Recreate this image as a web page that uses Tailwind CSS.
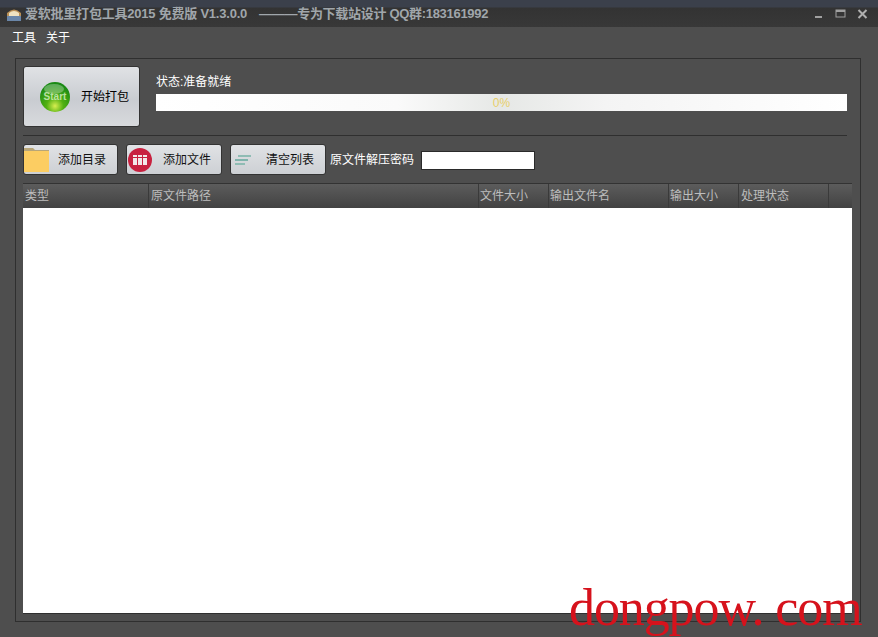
<!DOCTYPE html>
<html lang="zh-CN">
<head>
    <meta charset="UTF-8">
    <title>爱软批里打包工具</title>
    <script src="https://cdn.jsdelivr.net/npm/@tailwindcss/browser@4"></script>
</head>
<body class="bg-[#4d4d4d]">
<div class="relative w-[878px] h-[637px] overflow-hidden flex flex-col bg-[#4e4e4e] font-['Liberation_Sans','Noto_Sans_CJK_SC',sans-serif] text-[12px]">
    <!-- Title bar -->
    <div class="h-[27px] shrink-0 flex items-center bg-[linear-gradient(#3b404b_0,#3b404b_7px,#333333_8px,#383838_100%)] pl-[6px] pr-[10px]">
        <svg width="16" height="16" viewBox="0 0 16 16" class="mr-[3px]">
            <path d="M1 7 Q8 0 15 7 V11 H1Z" fill="#b98f55"/>
            <path d="M1 10 H15 V15 H1Z" fill="#6a86a8"/>
            <path d="M3 7 Q8 3 13 7 V10 H3Z" fill="#efe2c0"/>
        </svg>
        <span class="font-bold text-[13px] text-[#a0a6ab] whitespace-pre tracking-[-0.22px]">爱软批里打包工具2015 免费版 V1.3.0.0</span>
        <span class="font-bold text-[13px] text-[#a0a6ab] ml-[12px] whitespace-pre tracking-[-0.3px]">———专为下载站设计 QQ群:183161992</span>
        <div class="ml-auto flex items-center gap-[11px]">
            <svg width="10" height="10" viewBox="0 0 10 10"><rect x="1" y="7" width="7" height="2" fill="#a0a0a0"/></svg>
            <svg width="11" height="10" viewBox="0 0 11 10"><rect x="1" y="1" width="9" height="7" fill="none" stroke="#a0a0a0" stroke-width="1"/><rect x="1" y="1" width="9" height="2" fill="#a0a0a0"/></svg>
            <svg width="11" height="10" viewBox="0 0 11 10"><path d="M1.5 1 L9.5 9 M9.5 1 L1.5 9" stroke="#b0b0b0" stroke-width="2"/></svg>
        </div>
    </div>

    <!-- Menu -->
    <div class="h-[21px] shrink-0 flex items-center gap-[10px] pl-[12px] text-white">
        <span>工具</span>
        <span>关于</span>
    </div>

    <!-- Main panel -->
    <div class="mt-[10px] ml-[15px] w-[846px] h-[564px] border border-[#2f2f2f] flex flex-col pl-[7px] pr-[8px] pt-[7px]">
        <div class="flex h-[61px] shrink-0">
            <button class="w-[117px] h-[61px] rounded-[3px] border border-[#333] bg-[linear-gradient(#e0e2e5,#c9ccd1_55%,#d8dadd)] flex items-center pl-[15px]">
                <svg width="32" height="32" viewBox="0 0 32 32">
                    <defs>
                        <radialGradient id="ball" cx="50%" cy="80%" r="70%">
                            <stop offset="0" stop-color="#d8ee50"/>
                            <stop offset="0.4" stop-color="#52b012"/>
                            <stop offset="1" stop-color="#1a8a14"/>
                        </radialGradient>
                    </defs>
                    <circle cx="16" cy="16" r="15" fill="url(#ball)"/>
                    <ellipse cx="15" cy="8" rx="10" ry="5" fill="#ffffff" opacity="0.3"/>
                    <text x="16" y="19" text-anchor="middle" font-size="10" font-weight="700" fill="#b8e0a0" font-family="Liberation Sans">Start</text>
                </svg>
                <span class="ml-[10px] text-black">开始打包</span>
            </button>
            <div class="ml-[16px] flex-1 pt-[8px]">
                <div class="text-white leading-[16px]">状态:准备就绪</div>
                <div class="mt-[4px] w-[691px] h-[17px] flex items-center justify-center bg-[linear-gradient(90deg,#ffffff,#fafafa_35%,#e6e8e6_50%,#f4f4f4_65%,#ffffff)] text-[#e8cf6a]">0%</div>
            </div>
        </div>

        <div class="mt-[8px] h-px w-[824px] bg-[#2f2f2f] shrink-0"></div>

        <!-- Toolbar -->
        <div class="mt-[8px] flex items-center h-[32px] shrink-0">
            <button class="self-start w-[95px] h-[31px] rounded-[3px] border border-[#333] bg-[linear-gradient(#e0e2e5,#cdd0d4)] flex items-center text-[#111]">
                <svg width="25" height="24" viewBox="0 0 25 24" class="shrink-0">
                    <path d="M0 0 H9 L11 2 H25 V5 H0Z" fill="#b8a678"/>
                    <rect x="0" y="3" width="25" height="21" fill="#fccd62"/>
                </svg>
                <span class="ml-[9px] pt-[1px]">添加目录</span>
            </button>
            <button class="self-start ml-[8px] w-[96px] h-[31px] rounded-[3px] border border-[#333] bg-[linear-gradient(#e0e2e5,#cdd0d4)] flex items-center pl-[1px] text-[#111]">
                <svg width="24" height="24" viewBox="0 0 24 24" class="shrink-0">
                    <circle cx="12" cy="12" r="12" fill="#c8213f"/>
                    <rect x="5" y="7" width="4" height="10" fill="#f3e8e8"/>
                    <rect x="10" y="7" width="4" height="10" fill="#f3e8e8"/>
                    <rect x="15" y="7" width="4" height="10" fill="#f3e8e8"/>
                    <path d="M5 9.5 H19" stroke="#c8213f" stroke-width="1"/>
                </svg>
                <span class="ml-[11px] pt-[1px]">添加文件</span>
            </button>
            <button class="self-start ml-[8px] w-[96px] h-[31px] rounded-[3px] border border-[#333] bg-[linear-gradient(#e0e2e5,#cdd0d4)] flex items-center pl-[4px] text-[#111]">
                <svg width="17" height="10" viewBox="0 0 17 10" class="shrink-0">
                    <path d="M3 1 H16" stroke="#8fbcb4" stroke-width="2"/>
                    <path d="M0 5 H13" stroke="#7fb4ac" stroke-width="2"/>
                    <path d="M0 9 H10" stroke="#8fbcb4" stroke-width="2"/>
                </svg>
                <span class="ml-[14px] pt-[1px]">清空列表</span>
            </button>
            <span class="ml-[4px] text-white">原文件解压密码</span>
            <input class="ml-[7px] w-[114px] h-[19px] bg-white border border-[#2a2a2a]" type="text">
        </div>

        <!-- File list -->
        <div class="mt-[7px] w-[829px] h-[431px] flex flex-col border-b border-[#2f2f2f] shrink-0">
            <div class="h-[25px] shrink-0 flex text-[#bdbdbd] leading-[16px] border-t border-[#333] bg-[linear-gradient(#5c5c5c,#424242)]">
                <div class="w-[126px] pl-[2px] pt-[4px] border-r border-[#3a3a3a]">类型</div>
                <div class="w-[330px] pl-[2px] pt-[4px] border-r border-[#3a3a3a]">原文件路径</div>
                <div class="w-[70px] pl-[1px] pt-[4px] border-r border-[#3a3a3a]">文件大小</div>
                <div class="w-[120px] pl-[1px] pt-[4px] border-r border-[#3a3a3a]">输出文件名</div>
                <div class="w-[70px] pl-[1px] pt-[4px] border-r border-[#3a3a3a]">输出大小</div>
                <div class="w-[90px] pl-[2px] pt-[4px] border-r border-[#3a3a3a]">处理状态</div>
                <div class="flex-1"></div>
            </div>
            <div class="flex-1 bg-white"></div>
        </div>
    </div>

    <!-- Watermark -->
    <div class="absolute left-[569px] top-[578px] font-['Liberation_Serif',serif] text-[52px] leading-[60px] tracking-[-1.1px] text-[#d6121c] whitespace-pre">dongpow. com</div>
</div>
</body>
</html>
